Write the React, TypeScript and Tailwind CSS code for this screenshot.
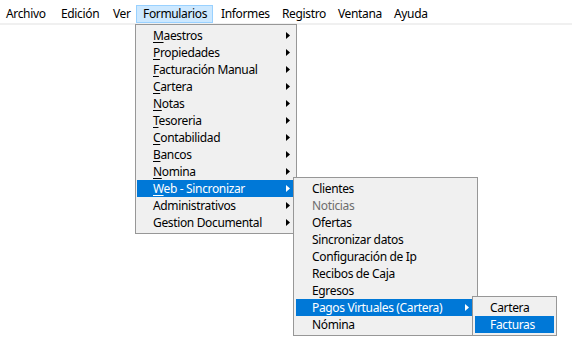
import React from "react";

type Item = { label: string; u?: number; arrow?: boolean; active?: boolean; disabled?: boolean };

const bar = [
  { label: "Archivo", w: "w-[53px]", pl: "pl-[5px]" },
  { label: "Edición", w: "w-[53px]", pl: "pl-[7px]" },
  { label: "Ver", w: "w-[30px]", pl: "pl-[6px]" },
  { label: "Formularios", w: "w-[77px]", pl: "pl-[6px]", open: true },
  { label: "Informes", w: "w-[61px]", pl: "pl-[7px]" },
  { label: "Registro", w: "w-[56px]", pl: "pl-[7px]" },
  { label: "Ventana", w: "w-[56px]", pl: "pl-[7px]" },
  { label: "Ayuda", w: "w-[48px]", pl: "pl-[7px]" },
];

const formularios: Item[] = [
  { label: "Maestros", u: 0, arrow: true },
  { label: "Propiedades", u: 0, arrow: true },
  { label: "Facturación Manual", u: 0, arrow: true },
  { label: "Cartera", u: 0, arrow: true },
  { label: "Notas", u: 0, arrow: true },
  { label: "Tesoreria", u: 0, arrow: true },
  { label: "Contabilidad", u: 0, arrow: true },
  { label: "Bancos", u: 0, arrow: true },
  { label: "Nomina", u: 0, arrow: true },
  { label: "Web - Sincronizar", u: 0, arrow: true, active: true },
  { label: "Administrativos", arrow: true },
  { label: "Gestion Documental", arrow: true },
];

const web: Item[] = [
  { label: "Clientes" },
  { label: "Noticias", disabled: true },
  { label: "Ofertas" },
  { label: "Sincronizar datos" },
  { label: "Configuración de Ip" },
  { label: "Recibos de Caja" },
  { label: "Egresos" },
  { label: "Pagos Virtuales (Cartera)", arrow: true, active: true },
  { label: "Nómina" },
];

const pagos: Item[] = [{ label: "Cartera" }, { label: "Facturas", active: true }];

const Arrow = ({ white }: { white?: boolean }) => (
  <svg width="4" height="7" viewBox="0 0 4 7" className="shrink-0">
    <path d="M0 0 L4 3.5 L0 7 Z" fill={white ? "#ffffff" : "#000000"} />
  </svg>
);

const Label = ({ item }: { item: Item }) => {
  if (item.u === undefined) return <span>{item.label}</span>;
  return (
    <span>
      <span className="underline underline-offset-[2px]">{item.label[item.u]}</span>
      {item.label.slice(item.u + 1)}
    </span>
  );
};

const Row = ({ item, pl, pr }: { item: Item; pl: string; pr: string }) => (
  <div
    className={`h-[17px] flex items-center justify-between ${pl} ${pr} ${
      item.active ? "bg-[#0078d7] text-white" : item.disabled ? "text-[#6d6d6d]" : "text-black"
    }`}
  >
    <Label item={item} />
    {item.arrow && <Arrow white={item.active} />}
  </div>
);

export default function App() {
  return (
    <div
      className="relative w-[572px] h-[350px] bg-white text-[12px] tracking-[-0.35px] leading-none overflow-hidden"
      style={{ fontFamily: '"Noto Sans", "Segoe UI", sans-serif' }}
    >
      {/* barra de menu */}
      <div className="h-[25px] flex pt-[5px] border-b-2 border-[#f0f0f0]">
        {bar.map((b) => (
          <div
            key={b.label}
            className={`${b.w} ${b.pl} h-[18px] flex items-center border ${
              b.open ? "bg-[#cce8ff] border-[#99d1ff]" : "border-transparent"
            }`}
          >
            {b.label}
          </div>
        ))}
      </div>

      {/* Formularios */}
      <div className="absolute left-[135px] top-[24px] w-[162px] bg-[#f0f0f0] border border-[#979797] px-[1px] py-[2px]">
        {formularios.map((it) => (
          <Row key={it.label} item={it} pl="pl-[16px]" pr="pr-[5px]" />
        ))}
      </div>

      {/* Web - Sincronizar */}
      <div className="absolute left-[293px] top-[177px] w-[185px] bg-[#f0f0f0] border border-[#979797] p-[2px]">
        {web.map((it) => (
          <Row key={it.label} item={it} pl="pl-[16px]" pr="pr-[6px]" />
        ))}
      </div>

      {/* Pagos Virtuales */}
      <div className="absolute left-[472px] top-[296px] w-[85px] bg-[#f0f0f0] border border-[#979797] p-[2px]">
        {pagos.map((it) => (
          <Row key={it.label} item={it} pl="pl-[15px]" pr="pr-[4px]" />
        ))}
      </div>
    </div>
  );
}
